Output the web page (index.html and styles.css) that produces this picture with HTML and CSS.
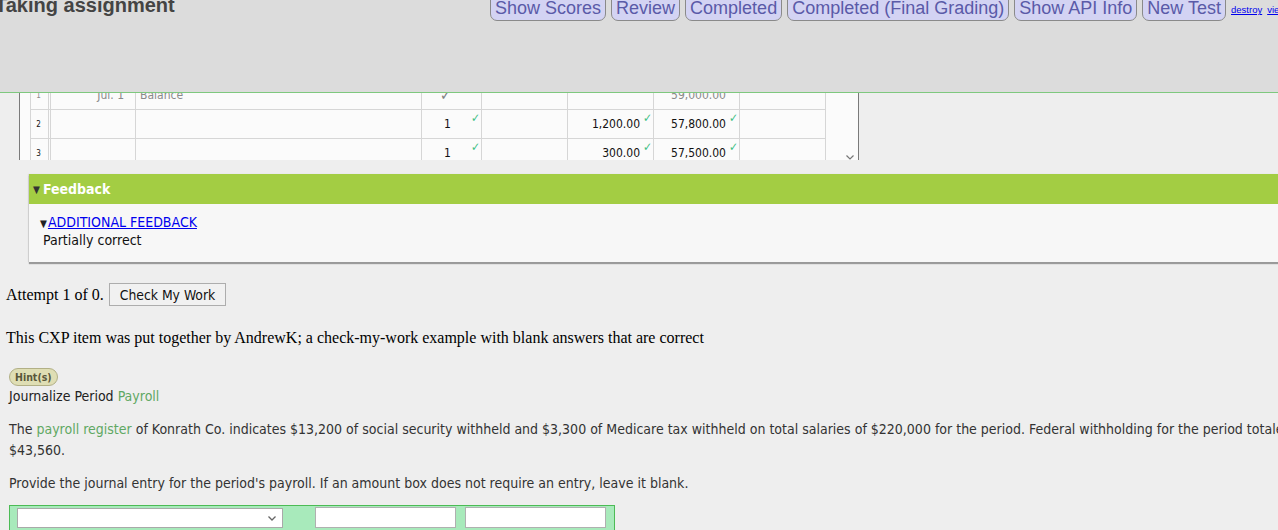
FILE: index.html
```html
<!DOCTYPE html>
<html lang="en">
<head>
<meta charset="utf-8">
<title>Taking assignment</title>
<link rel="stylesheet" href="styles.css">
</head>
<body>
<header class="topbar">
  <h1 class="title">Taking assignment</h1>
  <nav class="actions">
    <button class="nav-btn">Show Scores</button>
    <button class="nav-btn">Review</button>
    <button class="nav-btn">Completed</button>
    <button class="nav-btn">Completed (Final Grading)</button>
    <button class="nav-btn">Show API Info</button>
    <button class="nav-btn">New Test</button>
    <a class="mini-link" href="#">destroy</a>
    <a class="mini-link" href="#">view</a>
  </nav>
</header>

<main class="content">
  <div class="ledger-scroll">
    <table class="ledger">
      <tr class="row-locked">
        <td class="c-num">1</td>
        <td class="c-date">Jul. 1</td>
        <td class="c-desc">Balance</td>
        <td class="c-ref"><span class="tick-gray">&#10003;</span></td>
        <td class="c-amt"></td>
        <td class="c-amt"></td>
        <td class="c-amt">59,000.00</td>
        <td class="c-amt"></td>
      </tr>
      <tr>
        <td class="c-num">2</td>
        <td class="c-date"></td>
        <td class="c-desc"></td>
        <td class="c-ref">1<span class="tick">&#10003;</span></td>
        <td class="c-amt"></td>
        <td class="c-amt">1,200.00<span class="tick">&#10003;</span></td>
        <td class="c-amt">57,800.00<span class="tick">&#10003;</span></td>
        <td class="c-amt"></td>
      </tr>
      <tr>
        <td class="c-num">3</td>
        <td class="c-date"></td>
        <td class="c-desc"></td>
        <td class="c-ref">1<span class="tick">&#10003;</span></td>
        <td class="c-amt"></td>
        <td class="c-amt">300.00<span class="tick">&#10003;</span></td>
        <td class="c-amt">57,500.00<span class="tick">&#10003;</span></td>
        <td class="c-amt"></td>
      </tr>
    </table>
    <svg class="scroll-arrow" width="8" height="5" viewBox="0 0 8 5"><path d="M0.5 0.5 L4 4 L7.5 0.5" fill="none" stroke="#777" stroke-width="1.2"/></svg>
  </div>

  <section class="feedback">
    <div class="feedback-head"><span class="tri">&#9660;</span>Feedback</div>
    <div class="feedback-body">
      <div class="fb-line"><span class="tri-dark">&#9660;</span><a href="#" class="fb-link">ADDITIONAL FEEDBACK</a></div>
      <div class="fb-text">Partially correct</div>
    </div>
  </section>

  <div class="attempt">Attempt 1 of 0. <button class="check-btn">Check My Work</button></div>

  <p class="credit">This CXP item was put together by AndrewK; a check-my-work example with blank answers that are correct</p>

  <div class="question">
    <span class="hint">Hint(s)</span>
    <div class="q-title">Journalize Period <span class="term">Payroll</span></div>
    <p class="q-text">The <span class="term">payroll register</span> of Konrath Co. indicates $13,200 of social security withheld and $3,300 of Medicare tax withheld on total salaries of $220,000 for the period. Federal withholding for the period totaled $43,560.</p>
    <p class="q-text">Provide the journal entry for the period's payroll. If an amount box does not require an entry, leave it blank.</p>
    <div class="entry-row">
      <span class="select-wrap">
        <select class="acct-select"><option></option></select>
        <svg class="select-arrow" width="8" height="5" viewBox="0 0 8 5"><path d="M0.5 0.5 L4 4 L7.5 0.5" fill="none" stroke="#666" stroke-width="1.3"/></svg>
      </span>
      <input class="amt-input debit" type="text">
      <input class="amt-input" type="text">
    </div>
  </div>
</main>
</body>
</html>
```

FILE: styles.css
```css
html, body {
  margin: 0;
  padding: 0;
}

body {
  background: #eeeeee;
  overflow: hidden;
  width: 1278px;
  height: 530px;
}

/* ---------- top bar ---------- */
.topbar {
  display: flex;
  align-items: flex-start;
  height: 92px;
  background: #dcdcdc;
  border-bottom: 1px solid #7ec87e;
  overflow: hidden;
  white-space: nowrap;
}

.title {
  flex: 0 0 495px;
  margin: -6px 0 0 -5px;
  font: bold 20px/23px "Liberation Sans", Arial, sans-serif;
  color: #444444;
}

.actions {
  display: flex;
  align-items: flex-start;
  gap: 5px;
}

.nav-btn {
  margin-top: -3px;
  padding: 0 4px 2px;
  font: 18px/20px "Liberation Sans", Arial, sans-serif;
  color: #5a5aa8;
  background: #d3d3f3;
  border: 1px solid #8a8a8a;
  border-radius: 0 0 7px 7px;
}

.mini-link {
  margin-top: 4px;
  font: 9.5px "Liberation Sans", Arial, sans-serif;
  color: #0000ee;
  text-decoration: underline;
}

/* ---------- ledger ---------- */
.ledger-scroll {
  position: relative;
  margin-left: 19px;
  width: 838px;
  height: 67px;
  overflow: hidden;
  background: #fbfbfb;
  border-left: 1px solid #7a7a7a;
  border-right: 1px solid #7a7a7a;
}

.ledger {
  margin: -12px 0 0 10px;
  border-collapse: separate;
  border-spacing: 0;
  table-layout: fixed;
  width: 796px;
  font-family: "DejaVu Sans Condensed", "DejaVu Sans", sans-serif;
  font-stretch: condensed;
  font-size: 12px;
  color: #111111;
}

.ledger td {
  box-sizing: border-box;
  position: relative;
  height: 29px;
  padding: 0;
  border-right: 1px solid #d6d6d6;
  border-bottom: 1px solid #d6d6d6;
  vertical-align: middle;
  white-space: nowrap;
}

.ledger .c-num {
  width: 21px;
  border-left: 1px solid #d6d6d6;
  border-right: 3px double #d6d6d6;
  text-align: center;
  font-size: 8px;
  padding-right: 2px;
}

.ledger .c-date {
  width: 85px;
  text-align: right;
  padding-right: 11px;
}

.ledger .c-desc {
  width: 286px;
  padding-left: 4px;
}

.ledger .c-ref {
  width: 60px;
  padding-left: 22px;
}

.ledger .c-amt {
  width: 86px;
  text-align: right;
  padding-right: 13px;
}

.row-locked td {
  color: #8a8a8a;
}

.tick {
  position: absolute;
  top: 1px;
  right: 1px;
  font-size: 12px;
  line-height: 14px;
  color: #3cbf84;
}

.tick-gray {
  margin-left: -4px;
  font-size: 15px;
  color: #808080;
}

.scroll-arrow {
  position: absolute;
  right: 4px;
  bottom: 0;
}

/* ---------- feedback ---------- */
.feedback {
  margin: 14px 0 0 29px;
  width: 1260px;
  background: #f7f7f7;
  box-shadow: 0 2px 1px rgba(0, 0, 0, 0.35), -1px 0 1px rgba(0, 0, 0, 0.08);
  font-family: "DejaVu Sans Condensed", "DejaVu Sans", sans-serif;
  font-stretch: condensed;
  font-size: 14px;
}

.feedback-head {
  display: flex;
  align-items: center;
  height: 30px;
  padding-left: 4px;
  background: #a3cd43;
  color: #ffffff;
  font-weight: bold;
}

.tri {
  font-size: 10px;
  color: #333333;
  margin-right: 3px;
}

.feedback-body {
  height: 58px;
  box-sizing: border-box;
  padding: 9px 0 0 11px;
  color: #111111;
}

.fb-line,
.fb-text {
  height: 18px;
  line-height: 18px;
}

.tri-dark {
  font-size: 10px;
  color: #222222;
  margin-right: 1px;
}

.fb-link {
  color: #0000ee;
  text-decoration: underline;
}

.fb-text {
  padding-left: 3px;
}

/* ---------- attempt ---------- */
.attempt {
  display: flex;
  align-items: center;
  margin: 21px 0 0 6px;
  height: 23px;
  font: 16px "Liberation Serif", "Times New Roman", serif;
  color: #000000;
}

.check-btn {
  margin-left: 5px;
  height: 23px;
  padding: 0 10px;
  font-family: "DejaVu Sans Condensed", "DejaVu Sans", sans-serif;
  font-stretch: condensed;
  font-size: 13.8px;
  color: #111111;
  background: #f1f1f1;
  border: 1px solid #adadad;
  border-radius: 0;
}

.credit {
  margin: 22px 0 0 6px;
  font: 16px/20px "Liberation Serif", "Times New Roman", serif;
  color: #000000;
}

/* ---------- question ---------- */
.question {
  margin: 20px 0 0 9px;
  width: 1300px;
  font-family: "DejaVu Sans Condensed", "DejaVu Sans", sans-serif;
  font-stretch: condensed;
  font-size: 14px;
  color: #333333;
}

.hint {
  display: inline-block;
  vertical-align: top;
  height: 16px;
  padding: 0 5px;
  border: 1px solid #b2b086;
  border-radius: 9px;
  background: #dfdeb4;
  font-weight: bold;
  font-size: 10.5px;
  line-height: 16px;
  color: #59573a;
}

.q-title {
  line-height: 21px;
  color: #222222;
}

.term {
  color: #5fa863;
}

.q-text {
  margin: 12px 0 0;
  line-height: 21px;
}

.entry-row {
  display: flex;
  align-items: flex-start;
  margin-top: 11px;
  width: 597px;
  height: 26px;
  padding: 2px 0 0 7px;
  box-sizing: content-box;
  background: #a8eabb;
  border: 1px solid #4cbb55;
}

.select-wrap {
  position: relative;
  display: inline-block;
}

.acct-select {
  display: block;
  appearance: none;
  -webkit-appearance: none;
  width: 266px;
  height: 20px;
  margin: 0;
  background: #ffffff;
  border: 1px solid #a9a9a9;
  border-radius: 0;
}

.select-arrow {
  position: absolute;
  right: 7px;
  top: 8px;
}

.amt-input {
  box-sizing: border-box;
  width: 141px;
  height: 21px;
  margin: -1px 0 0 9px;
  padding: 0;
  background: #ffffff;
  border: 1px solid #b0b0b0;
  border-radius: 0;
}

.amt-input.debit {
  margin-left: 32px;
}
```
